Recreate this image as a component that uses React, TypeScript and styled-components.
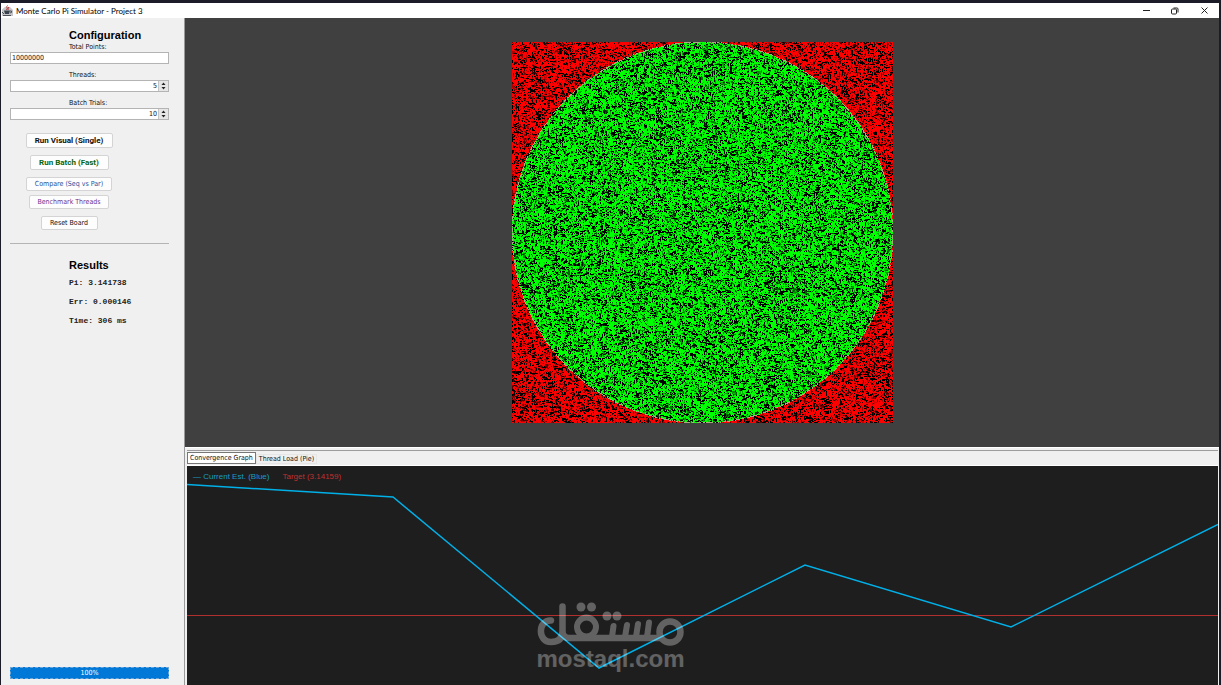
import React, { useEffect, useRef, useState } from "react";
import styled, { createGlobalStyle } from "styled-components";

const GlobalStyle = createGlobalStyle`
  *, *::before, *::after { box-sizing: border-box; }
  body { margin: 0; background: #1b1c28; }
`;

const uiFont = `"DejaVu Sans Condensed", "Open Sans", sans-serif`;
const arial = `"Liberation Sans", Arial, sans-serif`;

const Frame = styled.div`
  display: flex;
  flex-direction: column;
  height: 100vh;
  padding: 3px 2px 0 1px;
  overflow: hidden;
  font-family: ${uiFont};
  font-stretch: condensed;
  font-size: 7px;
  color: #111;
`;

const TitleBar = styled.header`
  display: flex;
  align-items: center;
  height: 15px;
  flex: none;
  padding: 0 8px 0 1px;
  background: #fff;
  gap: 3px;
`;

const Title = styled.h1`
  flex: 1;
  margin: 0;
  font: 400 8px/14px Lato, sans-serif;
  color: #000;
`;

const WindowButtons = styled.div`
  display: flex;
  gap: 15px;
`;

const WindowButton = styled.button`
  display: flex;
  align-items: center;
  justify-content: center;
  width: 14px;
  height: 13px;
  padding: 0;
  border: 0;
  background: transparent;
`;

const Body = styled.div`
  display: flex;
  flex: 1;
  min-height: 0;
`;

const Sidebar = styled.aside`
  display: flex;
  flex-direction: column;
  flex: none;
  width: 184px;
  padding: 11px 15px 6px 9px;
  background: #f0f0f0;
  border-right: 1px solid #9a9a9a;
`;

const Heading = styled.h2`
  margin: 0 0 1px 59px;
  font: 700 11px/13px ${arial};
  color: #000;
`;

const Field = styled.div`
  display: flex;
  flex-direction: column;
  margin-bottom: 7px;
`;

const Label = styled.label`
  margin-left: 59px;
  line-height: 9px;
`;

const InputBox = styled.div`
  display: flex;
  height: 12px;
  border: 1px solid #b4b4b4;
  background: #fff;
`;

const TextInput = styled.input<{ $right?: boolean }>`
  flex: 1;
  min-width: 0;
  padding: 0 1px;
  border: 0;
  outline: 0;
  background: transparent;
  font: inherit;
  color: #111;
  text-align: ${(p) => (p.$right ? "right" : "left")};
`;

const Stepper = styled.div`
  display: flex;
  flex-direction: column;
  width: 10px;
  background: #e6e6e6;
  border-left: 1px solid #c4c4c4;
`;

const StepButton = styled.button`
  display: flex;
  flex: 1;
  align-items: center;
  justify-content: center;
  padding: 0;
  border: 0;
  background: transparent;
`;

const Actions = styled.div`
  display: flex;
  flex-direction: column;
  align-items: center;
  gap: 4px;
  margin-top: 6px;
  padding-right: 41px;
`;

const ActionButton = styled.button<{ $color?: string; $strong?: boolean; $width: number; $gap?: number }>`
  width: ${(p) => p.$width}px;
  height: ${(p) => (p.$strong ? 15 : 14)}px;
  margin-bottom: ${(p) => p.$gap ?? 0}px;
  padding: 0;
  border: 1px solid #d4d4d4;
  border-radius: 2px;
  background: #fdfdfd;
  color: ${(p) => p.$color ?? "#111"};
  font: ${(p) => (p.$strong ? `700 8px/11px Roboto, sans-serif` : `400 7px/11px ${uiFont}`)};
  font-stretch: ${(p) => (p.$strong ? "normal" : "condensed")};
  white-space: nowrap;
`;

const Rule = styled.hr`
  width: 100%;
  margin: 13px 0 15px;
  border: 0;
  border-top: 1px solid #b4b4b4;
`;

const Results = styled.div`
  margin: 4px 0 0 59px;
  font: 700 8px/11px "Liberation Mono", monospace;
  color: #222;
`;

const Result = styled.p`
  margin: 0 0 8px;
`;

const Progress = styled.div`
  margin-top: auto;
  height: 12px;
  border: 1px dashed #6fa8d8;
  background: #0078d7;
  color: #fff;
  line-height: 10px;
  text-align: center;
`;

const Main = styled.main`
  display: flex;
  flex-direction: column;
  flex: 1;
  min-width: 0;
`;

const Visual = styled.section`
  display: flex;
  flex: 429 1 0;
  align-items: center;
  justify-content: center;
  min-height: 0;
  background: #404040;
`;

const Board = styled.canvas`
  display: block;
  width: 381px;
  height: 381px;
  image-rendering: pixelated;
`;

const Lower = styled.section`
  display: flex;
  flex-direction: column;
  flex: 235 1 0;
  min-height: 0;
  padding: 2px 1px 0 2px;
  background: #f0f0f0;
  border-top: 1px solid #fff;
`;

const Tabs = styled.div`
  display: flex;
  align-items: flex-end;
  flex: none;
  height: 16px;
  padding-bottom: 1px;
  border-top: 1px solid #9c9c9c;
  border-bottom: 1px solid #fff;
`;

const Tab = styled.button<{ $active?: boolean }>`
  height: ${(p) => (p.$active ? 12 : 10)}px;
  padding: 0 2px;
  border: 1px solid ${(p) => (p.$active ? "#777" : "#e6e6e6")};
  background: ${(p) => (p.$active ? "#fff" : "#f0f0f0")};
  color: #111;
  font: 400 7px/8px ${uiFont};
  font-stretch: condensed;
`;

const Graph = styled.div`
  position: relative;
  flex: 1;
  min-height: 0;
  background: #1e1e1e;
`;

const Plot = styled.svg`
  display: block;
  width: 100%;
  height: 100%;
`;

const Legend = styled.div`
  position: absolute;
  top: 6px;
  left: 6px;
  display: flex;
  gap: 13px;
  font: 400 8px/10px ${arial};
`;

const LegendItem = styled.span<{ $color: string }>`
  color: ${(p) => p.$color};
`;

const Watermark = styled.div`
  position: absolute;
  left: 0;
  right: 184px;
  bottom: 14px;
  display: flex;
  flex-direction: column;
  align-items: center;
  opacity: 0.3;
  color: #fff;
  font: 700 24px/25px ${arial};
`;

const BOARD = 381;

function drawBoard(canvas: HTMLCanvasElement) {
  const ctx = canvas.getContext("2d");
  if (!ctx) return;
  const image = ctx.createImageData(BOARD, BOARD);
  let seed = 314159;
  const random = () => {
    seed = (seed + 0x6d2b79f5) | 0;
    let t = Math.imul(seed ^ (seed >>> 15), 1 | seed);
    t = (t + Math.imul(t ^ (t >>> 7), 61 | t)) ^ t;
    return ((t ^ (t >>> 14)) >>> 0) / 4294967296;
  };
  const radius = BOARD / 2;
  const levels = new Uint8ClampedArray(BOARD * BOARD);
  for (let y = 0; y < BOARD; y++) {
    for (let x = 0; x < BOARD; x++) {
      // Points cluster: a cell sometimes repeats its left or upper neighbour.
      const at = y * BOARD + x;
      const spread = random();
      const r = random();
      let level = r < 0.25 ? 0 : r < 0.46 ? 50 + random() * 170 : 255;
      if (x > 0 && spread < 0.2) level = levels[at - 1];
      else if (y > 0 && spread < 0.36) level = levels[at - BOARD];
      levels[at] = level;

      const distance = Math.hypot(x + 0.5 - radius, y + 0.5 - radius);
      const outside = distance > radius;
      const edge = Math.abs(distance - radius) < 0.5 && random() < 0.6;
      const i = at * 4;
      image.data[i] = edge ? 170 : outside ? level : 0;
      image.data[i + 1] = edge ? 170 : outside ? 0 : level;
      image.data[i + 2] = edge ? 130 : 0;
      image.data[i + 3] = 255;
    }
  }
  ctx.putImageData(image, 0, 0);
}

function Spinner({ id, label, initial }: { id: string; label: string; initial: number }) {
  const [value, setValue] = useState(initial);
  return (
    <Field>
      <Label htmlFor={id}>{label}</Label>
      <InputBox>
        <TextInput id={id} $right value={value} onChange={(e) => setValue(Number(e.target.value) || 0)} />
        <Stepper>
          <StepButton aria-label={`Increase ${label}`} onClick={() => setValue(value + 1)}>
            <svg width="5" height="3"><path d="M.5 3 2.500 .5 4.500 3Z" fill="#222" /></svg>
          </StepButton>
          <StepButton aria-label={`Decrease ${label}`} onClick={() => setValue(value - 1)}>
            <svg width="5" height="3"><path d="M.5 0 2.500 2.500 4.500 0Z" fill="#222" /></svg>
          </StepButton>
        </Stepper>
      </InputBox>
    </Field>
  );
}

function JavaIcon() {
  return (
    <svg width="11" height="11" viewBox="0 0 11 11">
      <path d="M0 4.500 3 2h5l3 3v6H0z" fill="#c4c6ca" />
      <path d="M2 5.500h6L7 9H3z" fill="#39424c" />
      <path d="M8 6h1.500v1.500L8 8M0 7l2 2M1 10.500h8" fill="none" stroke="#4b4f55" />
      <path d="M5.500.5C3.500 2 6.500 3 4.500 5M7 2C5.500 3.500 6.500 4 6 5" fill="none" stroke="#b52f2f" />
    </svg>
  );
}

function LogoMark() {
  return (
    <svg width="148" height="44" viewBox="0 0 148 44" fill="none" stroke="#fff" strokeWidth="6.5" strokeLinecap="round">
      <path d="M14 18.500C.5 18 .5 40 14 40C22 40 25.500 36 25.500 29V4.500M25.500 29C25.500 33.500 28 36 32 36H123" />
      <circle cx="49.500" cy="25" r="9.500" strokeWidth="6" />
      <circle cx="133" cy="30" r="10.500" />
      <path d="M76.500 24 75 35M90 23 88 35M101 22 99 35M112 20.500 110 35" strokeWidth="6" />
      <g fill="#fff" stroke="none">
        <circle cx="44" cy="5" r="4.500" /><circle cx="54.500" cy="5" r="4.500" />
        <circle cx="70" cy="14" r="4.500" /><circle cx="80" cy="14" r="4.500" />
      </g>
    </svg>
  );
}

export default function App() {
  const board = useRef<HTMLCanvasElement>(null);
  const [points, setPoints] = useState("10000000");
  useEffect(() => {
    if (board.current) drawBoard(board.current);
  }, []);

  return (
    <Frame>
      <GlobalStyle />
      <TitleBar>
        <JavaIcon />
        <Title>Monte Carlo Pi Simulator - Project 3</Title>
        <WindowButtons>
          <WindowButton aria-label="Minimize">
            <svg width="7" height="7"><path d="M0 3.500h7" stroke="#222" /></svg>
          </WindowButton>
          <WindowButton aria-label="Restore">
            <svg width="8" height="8" fill="none" stroke="#222"><rect x=".5" y="2" width="5" height="5" rx="1" /><path d="M2.500 1h3.500q1 0 1 1v3.500" /></svg>
          </WindowButton>
          <WindowButton aria-label="Close">
            <svg width="7" height="7"><path d="M.5.5l6 6M6.500.5l-6 6" stroke="#222" /></svg>
          </WindowButton>
        </WindowButtons>
      </TitleBar>
      <Body>
        <Sidebar>
          <Heading>Configuration</Heading>
          <Field>
            <Label htmlFor="points">Total Points:</Label>
            <InputBox>
              <TextInput id="points" value={points} onChange={(e) => setPoints(e.target.value)} />
            </InputBox>
          </Field>
          <Spinner id="threads" label="Threads:" initial={5} />
          <Spinner id="trials" label="Batch Trials:" initial={10} />
          <Actions>
            <ActionButton $strong $width={87} $gap={3} $color="#111">Run Visual (Single)</ActionButton>
            <ActionButton $strong $width={79} $gap={3} $color="#0a640a">Run Batch (Fast)</ActionButton>
            <ActionButton $width={86} $color="#28509c">Compare (Seq vs Par)</ActionButton>
            <ActionButton $width={80} $gap={3} $color="#703090">Benchmark Threads</ActionButton>
            <ActionButton $width={57}>Reset Board</ActionButton>
          </Actions>
          <Rule />
          <Heading>Results</Heading>
          <Results>
            <Result>Pi: 3.141738</Result>
            <Result>Err: 0.000146</Result>
            <Result>Time: 306 ms</Result>
          </Results>
          <Progress role="progressbar" aria-label="Progress" aria-valuenow={100}>100%</Progress>
        </Sidebar>
        <Main>
          <Visual>
            <Board ref={board} width={BOARD} height={BOARD} />
          </Visual>
          <Lower>
            <Tabs role="tablist">
              <Tab role="tab" aria-selected $active>Convergence Graph</Tab>
              <Tab role="tab" aria-selected={false}>Thread Load (Pie)</Tab>
            </Tabs>
            <Graph>
              <Plot viewBox="0 0 1031 219" preserveAspectRatio="none">
                <path d="M0 149.500H1031" stroke="#b03030" vectorEffect="non-scaling-stroke" />
                <path d="M0 18.500 206 31 412 202 618 99 824 161 1031 58.500" fill="none" stroke="#00b0e8" strokeWidth="1.500" vectorEffect="non-scaling-stroke" />
              </Plot>
              <Legend>
                <LegendItem $color="#1a9cc4">— Current Est. (Blue)</LegendItem>
                <LegendItem $color="#c03030">Target (3.14159)</LegendItem>
              </Legend>
              <Watermark>
                <LogoMark />
                <span>mostaql.com</span>
              </Watermark>
            </Graph>
          </Lower>
        </Main>
      </Body>
    </Frame>
  );
}
